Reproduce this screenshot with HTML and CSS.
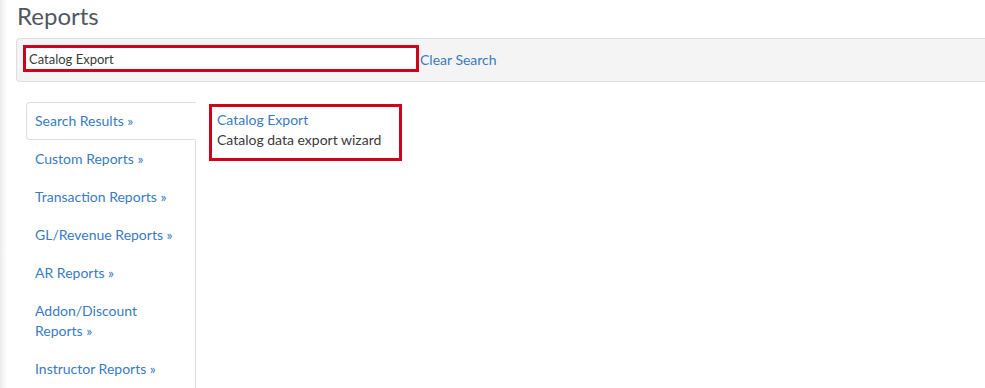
FILE: index.html
```
<!DOCTYPE html>
<html>
<head>
<meta charset="utf-8">
<link rel="stylesheet" href="styles.css">
</head>
<body>
<h1 class="title">Reports</h1>
<div class="searchbar">
  <input class="search-input" type="text" value="Catalog Export">
  <a class="clear-link" href="#">Clear Search</a>
</div>
<div class="main">
  <ul class="side-nav">
    <li class="nav-item active"><a href="#">Search Results »</a></li>
    <li class="nav-item"><a href="#">Custom Reports »</a></li>
    <li class="nav-item"><a href="#">Transaction Reports »</a></li>
    <li class="nav-item"><a href="#">GL/Revenue Reports »</a></li>
    <li class="nav-item"><a href="#">AR Reports »</a></li>
    <li class="nav-item"><a href="#">Addon/Discount Reports »</a></li>
    <li class="nav-item"><a href="#">Instructor Reports »</a></li>
  </ul>
  <div class="results">
    <div class="result">
      <a class="result-link" href="#">Catalog Export</a>
      <div class="result-desc">Catalog data export wizard</div>
    </div>
  </div>
</div>
</body>
</html>
```
FILE: styles.css
```
html, body {
  margin: 0;
  padding: 0;
}
body {
  font-family: Lato, "Open Sans", sans-serif;
  font-size: 14px;
  color: #333;
  background: linear-gradient(90deg, #ececec 0, #ffffff 7px);
  overflow: hidden;
  height: 388px;
}
a {
  color: #3a7bbf;
  text-decoration: none;
}
.title {
  margin: 0 0 6px 0;
  padding-left: 17px;
  font-size: 24px;
  font-weight: 400;
  line-height: 32px;
  color: #4f5862;
}
.searchbar {
  margin-left: 16px;
  display: flex;
  align-items: center;
  padding: 6px 0 9px 6px;
  background: #f4f4f4;
  border: 1px solid #dddddd;
  border-right: none;
  border-radius: 4px 0 0 4px;
}
.search-input {
  box-sizing: border-box;
  width: 396px;
  height: 27px;
  margin: 0;
  border: 3px solid #d0021b;
  padding: 0 3px;
  font-family: Lato, sans-serif;
  font-size: 13px;
  color: #3a3a3a;
  background: #fff;
  outline: none;
}
.clear-link {
  margin-left: 1px;
  padding-top: 3px;
  font-size: 14px;
  line-height: 20px;
}
.main {
  display: flex;
  align-items: flex-start;
  margin: 20px 0 0 26px;
}
.side-nav {
  list-style: none;
  margin: 0;
  padding: 0;
  width: 169px;
  min-height: 300px;
  border-right: 1px solid #dddddd;
}
.nav-item a {
  display: block;
  padding: 9px 9px;
  line-height: 20px;
  font-size: 14px;
}
.nav-item.active {
  margin-right: -1px;
}
.nav-item.active a {
  padding: 8px 9px 8px 8px;
  border: 1px solid #dddddd;
  border-right: 1px solid #ffffff;
  border-radius: 4px 0 0 4px;
  background: #fff;
}
.results {
  margin-left: 13px;
  padding-top: 2px;
}
.result {
  box-sizing: border-box;
  width: 193px;
  padding: 3px 5px 8px 5px;
  border: 3px solid #d0021b;
  line-height: 20px;
}
.result-link {
  display: block;
}
.result-desc {
  color: #3a3a3a;
}
```
